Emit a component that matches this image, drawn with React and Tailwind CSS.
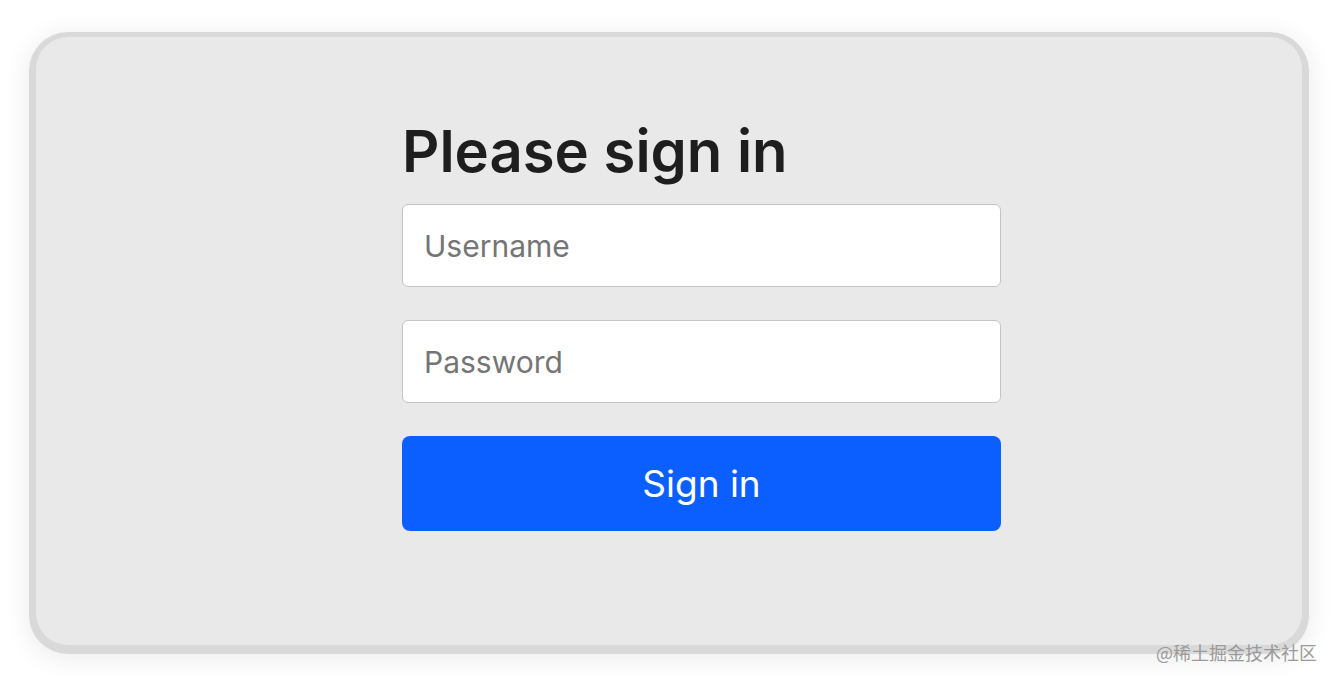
export default function App() {
  return (
    <div className="relative h-[682px] w-full overflow-hidden bg-white px-[36px] pt-[37px] font-['Inter','Noto_Sans',sans-serif]">
      <div className="h-[608px] w-[1266px] rounded-[32px] bg-[#e9e9e9] pl-[366px] pt-[79px] shadow-[0_2px_0_7px_#d9d9d9,0_6px_22px_12px_rgba(0,0,0,0.06)]">
        <form className="flex w-[599px] flex-col" onSubmit={(e) => e.preventDefault()}>
          <h1 className="mb-[18px] text-[58px] font-semibold leading-[70px] text-[#1e1e1f]">
            Please sign in
          </h1>
          <input
            type="text"
            placeholder="Username"
            className="mb-[33px] h-[83px] w-full rounded-[6px] border-[1.5px] border-[#c4c4c4] bg-white px-[21px] text-[30px] text-[#212529] outline-none placeholder:text-[#757575]"
          />
          <input
            type="password"
            placeholder="Password"
            className="mb-[33px] h-[83px] w-full rounded-[6px] border-[1.5px] border-[#c4c4c4] bg-white px-[21px] text-[30px] text-[#212529] outline-none placeholder:text-[#757575]"
          />
          <button
            type="submit"
            className="h-[95px] w-full rounded-[8px] bg-[#0b5fff] text-[37px] text-white"
          >
            Sign in
          </button>
        </form>
      </div>
      <div className="absolute bottom-[21px] right-[21px] font-['Noto_Sans_CJK_SC',sans-serif] text-[18px] leading-none text-[#9a9a9a]">
        @稀土掘金技术社区
      </div>
    </div>
  );
}
